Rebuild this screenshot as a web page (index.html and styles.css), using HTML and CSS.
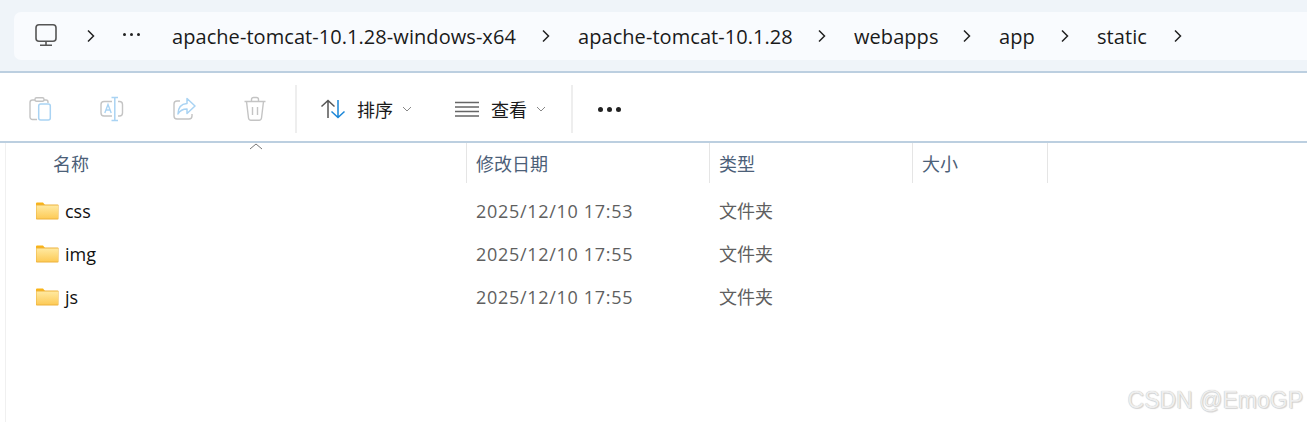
FILE: index.html
```html
<!DOCTYPE html>
<html lang="zh">
<head>
<meta charset="utf-8">
<title>static</title>
<link rel="stylesheet" href="styles.css">
</head>
<body>
<div class="window">
  <div class="addressband">
    <nav class="breadcrumb">
      <svg class="pc" width="26" height="26" viewBox="0 0 26 26" fill="none"><rect x="2" y="1.700" width="20" height="16.600" rx="3" stroke="#555" stroke-width="1.600"/><path d="M12 18.500v3M6 22.300h12" stroke="#555" stroke-width="1.600"/></svg>
      <svg class="chev" width="10" height="14" viewBox="0 0 10 14" fill="none"><path d="M2 1.500 7.500 7 2 12.500" stroke="#222" stroke-width="1.500"/></svg>
      <span class="dots" aria-label="more"><i></i><i></i><i></i></span>
      <span class="crumb w1">apache-tomcat-10.1.28-windows-x64</span>
      <svg class="chev" width="10" height="14" viewBox="0 0 10 14" fill="none"><path d="M2 1.500 7.500 7 2 12.500" stroke="#222" stroke-width="1.500"/></svg>
      <span class="crumb w2">apache-tomcat-10.1.28</span>
      <svg class="chev" width="10" height="14" viewBox="0 0 10 14" fill="none"><path d="M2 1.500 7.500 7 2 12.500" stroke="#222" stroke-width="1.500"/></svg>
      <span class="crumb w3">webapps</span>
      <svg class="chev" width="10" height="14" viewBox="0 0 10 14" fill="none"><path d="M2 1.500 7.500 7 2 12.500" stroke="#222" stroke-width="1.500"/></svg>
      <span class="crumb w4">app</span>
      <svg class="chev" width="10" height="14" viewBox="0 0 10 14" fill="none"><path d="M2 1.500 7.500 7 2 12.500" stroke="#222" stroke-width="1.500"/></svg>
      <span class="crumb w5">static</span>
      <svg class="chev" width="10" height="14" viewBox="0 0 10 14" fill="none"><path d="M2 1.500 7.500 7 2 12.500" stroke="#222" stroke-width="1.500"/></svg>
    </nav>
  </div>

  <div class="toolbar">
    <div class="tools">
      <svg class="tool" width="24" height="26" viewBox="0 0 24 26" fill="none"><path d="M7 4H4.500A2.500 2.500 0 0 0 2 6.500V21a2.500 2.500 0 0 0 2.500 2.500H9M16 4h2a2 2 0 0 1 2 2v1" stroke="#c4c4c4" stroke-width="1.400"/><rect x="7" y="1.700" width="9" height="3.600" rx="1.500" stroke="#c4c4c4" stroke-width="1.400"/><rect x="10.700" y="8" width="11.600" height="16" rx="2" stroke="#a9d3f3" stroke-width="1.500"/></svg>
      <svg class="tool" width="26" height="26" viewBox="0 0 26 26" fill="none"><path d="M13 5.500H5a3 3 0 0 0-3 3V17a3 3 0 0 0 3 3h8M19 5.500h1.500a3 3 0 0 1 3 3V17a3 3 0 0 1-3 3H19" stroke="#c4c4c4" stroke-width="1.400"/><path d="M12.500 1.500h6.500M15.800 1.500v23M12.500 24.500h6.500" stroke="#a9d3f3" stroke-width="1.500"/><path d="M5.800 17 9 8.500l3.200 8.500M7 14h4" stroke="#a9d3f3" stroke-width="1.400"/></svg>
      <svg class="tool" width="24" height="26" viewBox="0 0 24 26" fill="none"><path d="M8 5H5a3 3 0 0 0-3 3v12a3 3 0 0 0 3 3h12a3 3 0 0 0 3-3v-2" stroke="#c4c4c4" stroke-width="1.400"/><path d="M15 2.500 23 10l-8 7.500V13c-4 0-7 1.500-9 5 0-6 3-10 9-10.500z" stroke="#a9d3f3" stroke-width="1.500" stroke-linejoin="round"/></svg>
      <svg class="tool" width="24" height="26" viewBox="0 0 24 26" fill="none"><path d="M1.500 5.500h21M8.500 5V3.500A2 2 0 0 1 10.500 1.500h3a2 2 0 0 1 2 2V5M3.500 5.500 5.500 22a2.500 2.500 0 0 0 2.500 2.200h8a2.500 2.500 0 0 0 2.500-2.200l2-16.500" stroke="#c4c4c4" stroke-width="1.400"/><path d="M9.500 11v8M14.500 11v8" stroke="#c4c4c4" stroke-width="1.400"/></svg>
    </div>
    <span class="divider"></span>
    <div class="menu sort">
      <svg width="26" height="20" viewBox="0 0 26 20" fill="none"><path d="M1.500 7.500 8 1.500l6.500 6M8 2v17" stroke="#555" stroke-width="1.500"/><path d="M11.500 12.500 18 18.500l6.500-6M18 18V1" stroke="#1a86d8" stroke-width="1.500"/></svg>
      <span class="menulabel">排序</span>
      <svg class="caret" width="10" height="6" viewBox="0 0 10 6" fill="none"><path d="M1 1l4 4 4-4" stroke="#888" stroke-width="1"/></svg>
    </div>
    <div class="menu view">
      <svg width="24" height="16" viewBox="0 0 24 16" fill="none"><path d="M0 1.500h24M0 6h24M0 10.500h24M0 15h24" stroke="#666" stroke-width="1.300"/></svg>
      <span class="menulabel wide">查看</span>
      <svg class="caret" width="10" height="6" viewBox="0 0 10 6" fill="none"><path d="M1 1l4 4 4-4" stroke="#888" stroke-width="1"/></svg>
    </div>
    <span class="divider"></span>
    <span class="more"><i></i><i></i><i></i></span>
  </div>

  <div class="content">
    <div class="list">
      <div class="head">
        <div class="hcell cname">名称<svg class="sortcaret" width="14" height="7" viewBox="0 0 14 7" fill="none"><path d="M1 6l6-5 6 5" stroke="#777" stroke-width="1"/></svg></div>
        <div class="hcell cdate">修改日期</div>
        <div class="hcell ctype">类型</div>
        <div class="hcell csize">大小</div>
      </div>
      <div class="rows">
        <div class="row">
          <div class="cell cname"><svg class="folder" width="23" height="18" viewBox="0 0 23 18"><use href="#folder"/></svg><span class="fname">css</span></div>
          <div class="cell cdate">2025/12/10 17:53</div>
          <div class="cell ctype">文件夹</div>
        </div>
        <div class="row">
          <div class="cell cname"><svg class="folder" width="23" height="18" viewBox="0 0 23 18"><use href="#folder"/></svg><span class="fname">img</span></div>
          <div class="cell cdate">2025/12/10 17:55</div>
          <div class="cell ctype">文件夹</div>
        </div>
        <div class="row">
          <div class="cell cname"><svg class="folder" width="23" height="18" viewBox="0 0 23 18"><use href="#folder"/></svg><span class="fname">js</span></div>
          <div class="cell cdate">2025/12/10 17:55</div>
          <div class="cell ctype">文件夹</div>
        </div>
      </div>
    </div>
    <div class="watermark">CSDN @EmoGP</div>
  </div>
</div>
<svg class="defs" width="0" height="0">
  <defs>
    <linearGradient id="fg" x1="0" y1="0" x2="0" y2="1"><stop offset="0" stop-color="#ffe9a0"/><stop offset="1" stop-color="#fdcb58"/></linearGradient>
    <symbol id="folder" viewBox="0 0 23 18">
      <path d="M0 1.500A1 1 0 0 1 1 .5h6l2 2.500H0z" fill="#f9b316"/>
      <rect x="0" y="2.500" width="22.500" height="15" rx=".8" fill="#edb23c"/>
      <rect x="0.500" y="3.500" width="21.500" height="13" fill="url(#fg)"/>
    </symbol>
  </defs>
</svg>
</body>
</html>
```
FILE: styles.css
```css
* { box-sizing: border-box; }
html, body { margin: 0; padding: 0; background: #fff; }
body { width: 1307px; height: 422px; overflow: hidden; font-family: "Open Sans", "Noto Sans CJK SC", sans-serif; }
.window { display: flex; flex-direction: column; height: 422px; }

.addressband { height: 73px; padding: 12px 0 0 14px; background: #eff4f9; border-bottom: 2px solid #bccfe0; }
.breadcrumb { display: flex; align-items: center; height: 48px; padding-left: 20px; background: #f9fbfe; border-radius: 7px 0 0 7px; }
.pc { margin-right: 26px; flex: none; }
.chev { flex: none; margin-right: 27px; }
.dots { display: flex; gap: 4px; width: 49px; margin-top: -4px; flex: none; }
.dots i { width: 3px; height: 3px; border-radius: 50%; background: #222; }
.crumb { font-size: 20px; color: #1a1a1a; letter-spacing: .06px; white-space: nowrap; line-height: 28px; flex: none; margin-top: 1px; }
.w1 { width: 369px; }
.w2 { width: 239px; }
.w3 { width: 108px; }
.w4 { width: 61px; }
.w5 { width: 76px; }

.toolbar { display: flex; align-items: center; height: 70px; border-bottom: 2px solid #bccfe0; padding-top: 4px; }
.tools { display: flex; align-items: center; width: 295px; padding-left: 28px; gap: 47px; }
.tool { flex: none; }
.divider { width: 2px; height: 48px; background: #eeeeee; flex: none; }
.menu { display: flex; align-items: center; }
.sort { margin-left: 23px; width: 135px; }
.view { width: 116px; }
.menulabel { font-size: 18px; color: #1a1a1a; margin-left: 11px; font-family: "Noto Sans CJK SC", sans-serif; line-height: 24px; }
.wide { margin-left: 12px; }
.caret { margin-left: 9px; }
.more { display: flex; gap: 4px; margin-left: 25px; }
.more i { width: 5px; height: 5px; border-radius: 50%; background: #222; }

.content { position: relative; flex: 1; padding-left: 5px; }
.list { height: 100%; border-left: 1px solid #f0f0f0; }
.head { display: flex; height: 40px; }
.hcell { position: relative; height: 40px; font-size: 18px; line-height: 40px; color: #4c6078; border-right: 1px solid #e5e5e5; padding-left: 9px; font-family: "Noto Sans CJK SC", sans-serif; }
.head .cname { width: 461px; padding-left: 47px; }
.head .cdate { width: 243px; }
.head .ctype { width: 203px; }
.head .csize { width: 135px; }
.sortcaret { position: absolute; left: 243px; top: 0; }

.rows { padding-top: 6px; }
.row { display: flex; height: 43px; align-items: center; }
.cell { font-size: 18px; white-space: nowrap; padding-left: 9px; }
.row .cname { width: 461px; display: flex; align-items: center; padding-left: 30px; }
.row .cdate { width: 243px; color: #5f5f5f; letter-spacing: .69px; }
.row .ctype { width: 203px; color: #5f5f5f; font-family: "Noto Sans CJK SC", sans-serif; margin-top: -2px; }
.folder { flex: none; margin-right: 6px; }
.fname { color: #111; }

.watermark { position: absolute; right: 4px; bottom: 8px; font-family: "Liberation Sans", sans-serif; font-size: 23px; line-height: 28px; color: #eeeeee; text-shadow: 0 0 1px #b4b4b4, 1px 1px 1px #d8d8d8; }
.defs { position: absolute; }
```
